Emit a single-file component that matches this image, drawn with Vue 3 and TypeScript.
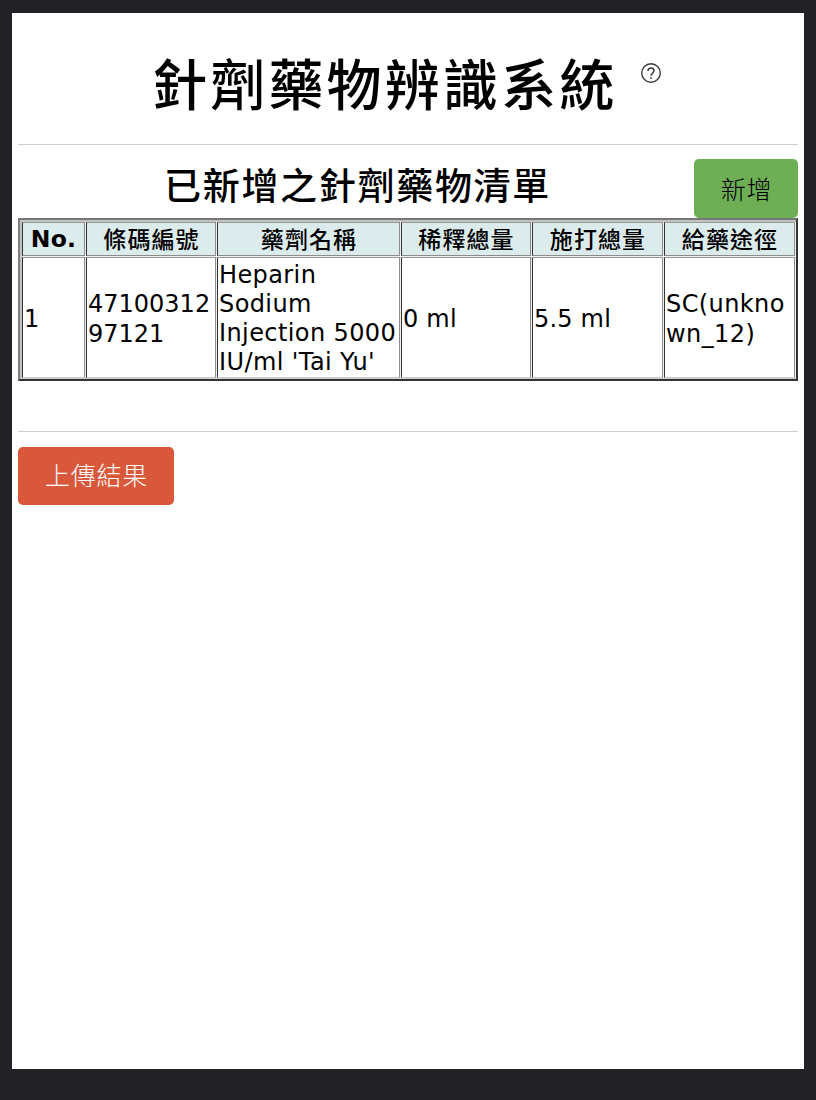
<script setup lang="ts">
interface Medicine {
  barcode: string
  name: string
  dilution: string
  dose: string
  route: string
}

const headers: string[] = ['No.', '條碼編號', '藥劑名稱', '稀釋總量', '施打總量', '給藥途徑']
const medicines: Medicine[] = [
  {
    barcode: '4710031297121',
    name: "Heparin Sodium Injection 5000 IU/ml 'Tai Yu'",
    dilution: '0 ml',
    dose: '5.5 ml',
    route: 'SC(unknown_12)',
  },
]
</script>

<template>
  <div class="frame">
    <main class="page">
      <header class="title-row">
        <h1>針劑藥物辨識系統</h1>
        <svg class="help" viewBox="0 0 22 22" width="22" height="22" fill="none" stroke="#3c3c3c">
          <circle cx="11" cy="11" r="9.3" stroke-width="1.4" />
          <path d="M8 8.900C8 7 9.300 5.900 11 5.900s3 1.100 3 2.700c0 1.400-.8 2-1.600 2.700-.9.7-1.400 1.200-1.400 2.400" stroke-width="1.500" />
          <circle cx="11" cy="15.900" r=".9" fill="#3c3c3c" stroke="none" />
        </svg>
      </header>
      <hr />
      <div class="list-head">
        <h2>已新增之針劑藥物清單</h2>
        <button class="btn add" type="button">新增</button>
      </div>
      <table>
        <colgroup>
          <col class="c-no" />
          <col class="c-std" />
          <col class="c-name" />
          <col class="c-std" />
          <col class="c-wide" />
          <col class="c-wide" />
        </colgroup>
        <thead>
          <tr>
            <th v-for="h in headers" :key="h" :class="{ latin: h === 'No.' }">{{ h }}</th>
          </tr>
        </thead>
        <tbody>
          <tr v-for="(m, i) in medicines" :key="m.barcode">
            <td>{{ i + 1 }}</td>
            <td>{{ m.barcode }}</td>
            <td class="name">{{ m.name }}</td>
            <td class="amount">{{ m.dilution }}</td>
            <td class="amount">{{ m.dose }}</td>
            <td class="route">{{ m.route }}</td>
          </tr>
        </tbody>
      </table>
      <hr class="second" />
      <button class="btn upload" type="button">上傳結果</button>
    </main>
  </div>
</template>

<style>
body {
  margin: 0;
  background: #222126;
}
</style>

<style scoped>
.frame {
  box-sizing: border-box;
  width: 816px;
  height: 1100px;
  padding: 13px 12px 31px;
  background: #222126;
  font-family: Verdana, 'DejaVu Sans', 'Noto Sans CJK TC', sans-serif;
  color: #000;
}
.page {
  box-sizing: border-box;
  height: 1056px;
  padding: 0 6px;
  background: #fff;
}
.title-row {
  display: flex;
  height: 131px;
  padding-left: 134px;
}
h1 {
  margin: 28px 0 0;
  font: 500 55px/80px 'Noto Sans CJK TC', sans-serif;
  letter-spacing: 3.2px;
  white-space: nowrap;
}
.help {
  margin: 49px 0 0 22px;
}
hr {
  height: 1px;
  margin: 0;
  border: 0;
  background: #cfcfcf;
}
.list-head {
  display: flex;
  height: 59px;
  margin-top: 14px;
}
.list-head h2 {
  flex: 1;
  margin: 0;
  padding-left: 146px;
  font: 500 37px/50px 'Noto Sans CJK TC', sans-serif;
  letter-spacing: 1.7px;
}
.btn {
  height: 58px;
  padding: 0;
  border: 0;
  border-radius: 5px;
  font: 300 25px/54px 'Noto Sans CJK TC', sans-serif;
  letter-spacing: 0.7px;
}
.add {
  width: 104px;
  height: 59px;
  padding: 0 0 2px 1px;
  background: #6eae55;
  color: #000;
}
.upload {
  display: block;
  width: 156px;
  margin-top: 15px;
  padding: 0 0 4px 1px;
  background: #d9573a;
  color: #fff;
}
table {
  box-sizing: border-box;
  width: 780px;
  table-layout: fixed;
  border-collapse: separate;
  border-spacing: 1px;
  padding: 1px 0 0 1px;
  border: 2px solid;
  border-color: #777 #333 #333 #808080;
  background: #f0f0f0;
  box-shadow: inset 2px 2px 0 #c2c2c2, inset 0 -1px 0 #ccc;
  font-size: 24px;
  line-height: 29.330px;
}
.c-no {
  width: 63px;
}
.c-std {
  width: 130px;
}
.c-name {
  width: 183px;
}
.c-wide {
  width: 131px;
}
th,
td {
  box-sizing: border-box;
  border: 1px solid;
  border-color: #999 #8c8c8c #8c8c8c #333;
}
th {
  height: 34px;
  padding: 0 0 2px 1px;
  background: #dcecec;
  font: 500 23px/30px 'Noto Sans CJK TC', sans-serif;
  letter-spacing: 1.1px;
}
th.latin {
  padding: 0;
  font: 700 23.500px/32px Verdana, 'DejaVu Sans', sans-serif;
  letter-spacing: 0.2px;
}
td {
  height: 121px;
  padding: 2px 0 0 1px;
  border-bottom-color: #ccc;
  background: #fff;
  line-height: 29.400px;
  overflow-wrap: anywhere;
  vertical-align: bottom;
  vertical-align: middle;
}
td:not(.name) {
  padding-top: 4px;
}
.name {
  padding-top: 3px;
  line-height: 29px;
  letter-spacing: 0.4px;
}
.amount {
  letter-spacing: 0.2px;
}
.route {
  letter-spacing: 0.4px;
}
.second {
  margin-top: 50px;
}
</style>
